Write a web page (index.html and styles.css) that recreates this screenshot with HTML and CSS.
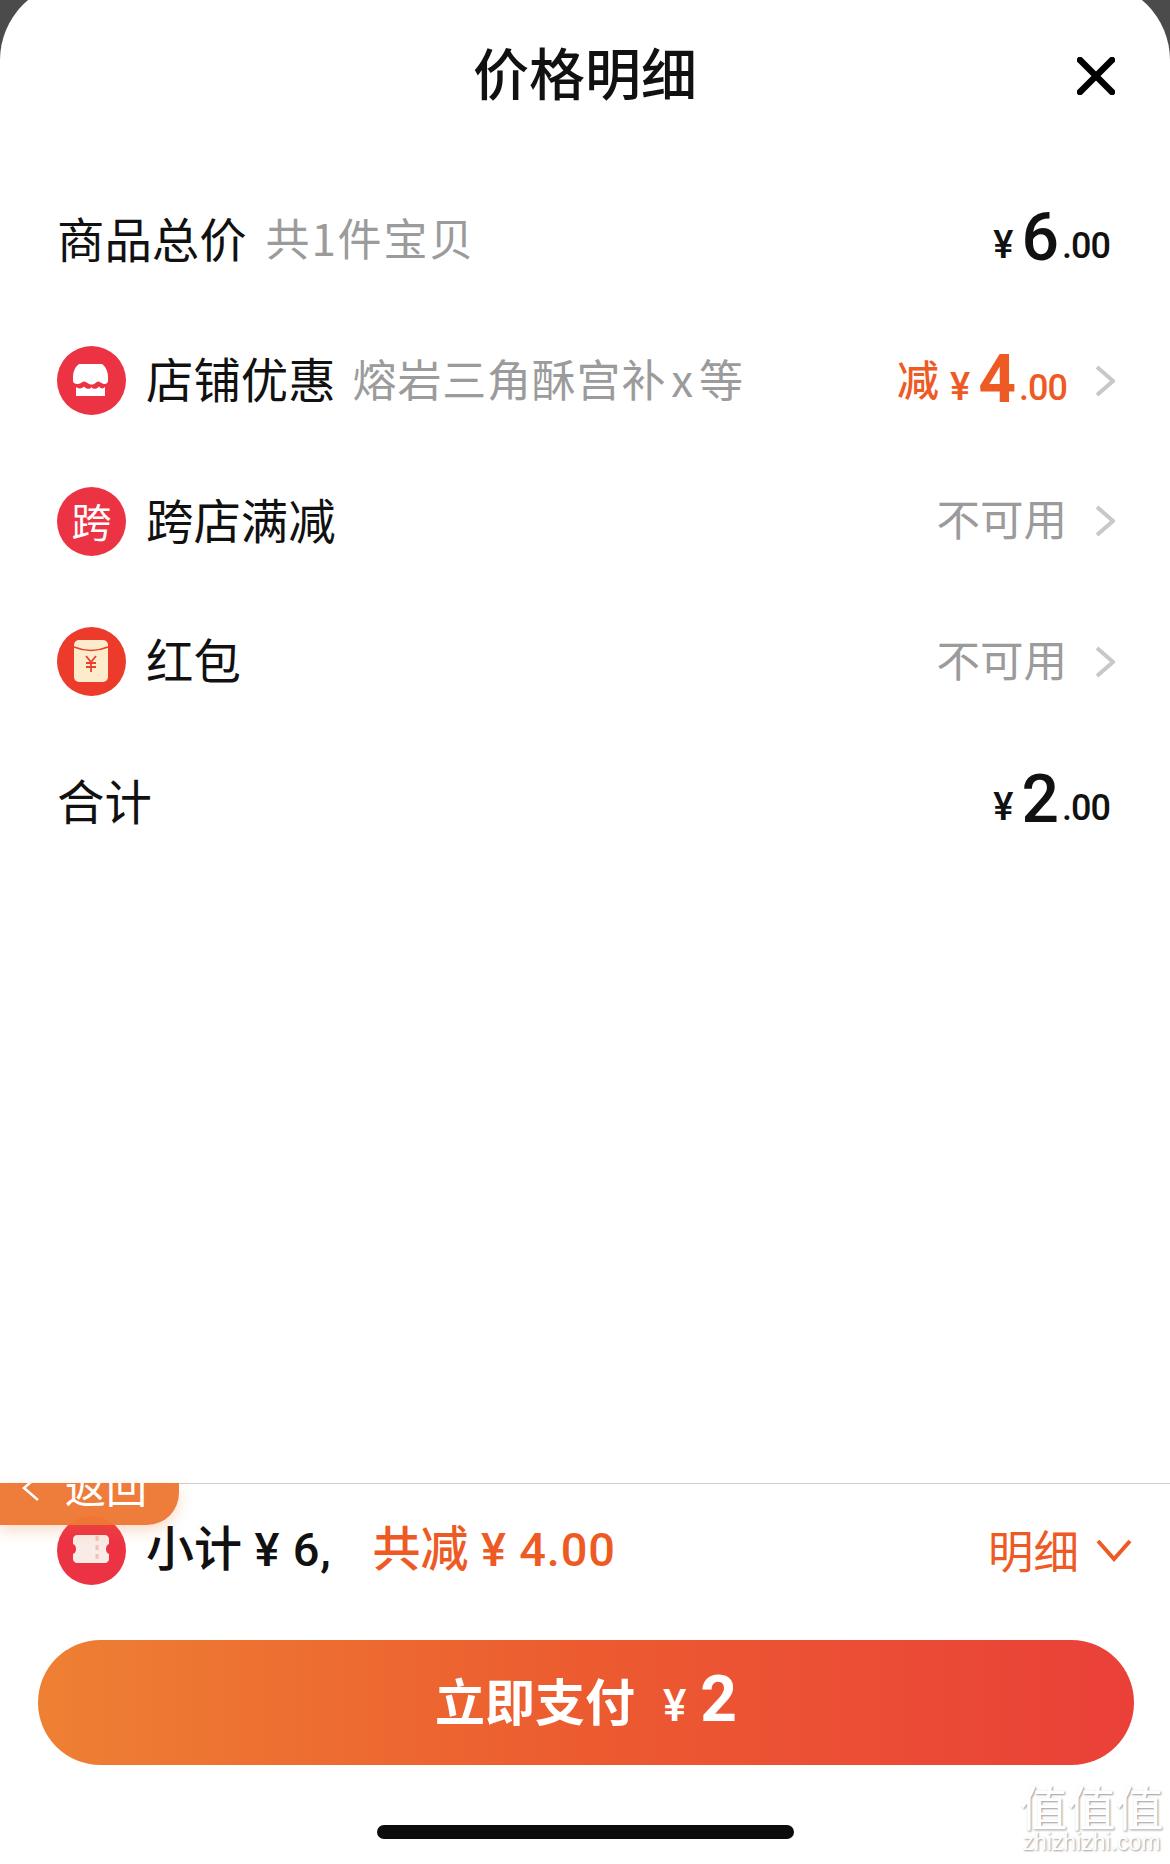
FILE: index.html
```html
<!DOCTYPE html>
<html lang="zh">
<head>
<meta charset="utf-8">
<title>价格明细</title>
<link rel="stylesheet" href="styles.css">
</head>
<body>
<div class="sheet">
  <header class="head">
    <h1 class="title">价格明细</h1>
    <svg class="close" viewBox="0 0 38 38"><path d="M3 3 35 35M35 3 3 35"/></svg>
  </header>
  <main class="list">
    <div class="row">
      <div class="left"><span class="name">商品总价</span><span class="sub sub-a">共1件宝贝</span></div>
      <div class="price price-end"><span class="yen">¥</span><span class="big">6</span><span class="dec">.00</span></div>
    </div>
    <div class="row">
      <div class="left">
        <svg class="ico" viewBox="0 0 69 69"><circle cx="34.5" cy="34.5" r="34.5" fill="#ec3344"/><path fill="#fff" d="M22 18H45C49 21 51 26 51 31V35C51 38 47 39 44.500 37 42 35 40 35 38.500 37 36 39 33 39 30.500 37 28 35 26 35 24 37 21 39 16 38 16 35V31C16 26 18 21 22 18Z"/><path fill="#fff" d="M19 41C21 43 25 43 27 40.500 29 43 33 44 34.500 41 36 44 40 43 42 40.500 44 43 46 43 48 41V50H19Z"/></svg>
        <span class="name">店铺优惠</span><span class="sub sub-b">熔岩三角酥宫补<span class="sub-x">x</span>等</span>
      </div>
      <div class="right">
        <div class="price orange"><span class="cut">减</span><span class="yen">¥</span><span class="big big-strong">4</span><span class="dec">.00</span></div>
        <svg class="chev" viewBox="0 0 20 32"><path d="M2 2 18 16 2 30"/></svg>
      </div>
    </div>
    <div class="row">
      <div class="left">
        <span class="ico ico-text">跨</span>
        <span class="name">跨店满减</span>
      </div>
      <div class="right"><span class="na">不可用</span><svg class="chev" viewBox="0 0 20 32"><path d="M2 2 18 16 2 30"/></svg></div>
    </div>
    <div class="row">
      <div class="left">
        <svg class="ico" viewBox="0 0 69 69"><circle cx="34.500" cy="34.500" r="34.500" fill="#ec3a2b"/><rect x="17" y="13" width="34" height="42" rx="5" fill="#fdeccb"/><path d="M17 20Q34 27 51 20" fill="none" stroke="#e8402f" stroke-width="1.500"/><path d="M29 29 34 35 39 29M34 35V45M29 36H39M29 40H39" fill="none" stroke="#e8402f" stroke-width="1.800"/></svg>
        <span class="name">红包</span>
      </div>
      <div class="right"><span class="na">不可用</span><svg class="chev" viewBox="0 0 20 32"><path d="M2 2 18 16 2 30"/></svg></div>
    </div>
    <div class="row">
      <div class="left"><span class="name">合计</span></div>
      <div class="price price-end"><span class="yen">¥</span><span class="big">2</span><span class="dec">.00</span></div>
    </div>
  </main>
  <footer class="foot">
    <div class="back">
      <svg class="back-arrow" viewBox="0 0 20 24"><path d="M17 2 3 14 17 26"/></svg>
      <span class="back-text">返回</span>
    </div>
    <div class="sum">
      <div class="left">
        <svg class="ico" viewBox="0 0 69 69"><circle cx="34.500" cy="34.500" r="34.500" fill="#ec3344"/><path fill="#f9ebe6" d="M20 19H48C50 19 52 21 52 23V28C48 29 48 37 52 38V43C52 45 50 47 48 47H20C18 47 16 45 16 43V38C20 37 20 29 16 28V23C16 21 18 19 20 19Z"/><path d="M40 20V46" stroke="#f3c0b2" stroke-width="3" stroke-dasharray="5 4"/></svg>
        <span class="name name-strong">小计<span class="num"> ¥ 6,</span></span>
        <span class="name name-strong orange total-cut">共减<span class="num"> ¥ 4.00</span></span>
      </div>
      <div class="detail"><span class="detail-text">明细</span><svg class="chev-down" viewBox="0 0 36 24"><path d="M2 3 18 21 34 3"/></svg></div>
    </div>
    <div class="pay-wrap">
      <button class="pay"><span class="pay-label">立即支付</span><span class="pay-yen">¥</span><span class="pay-num">2</span></button>
    </div>
    <div class="home"></div>
    <div class="mark"><span class="mark-cn">值值值</span><span class="mark-en">zhizhizhi.com</span></div>
  </footer>
</div>
</body>
</html>
```
FILE: styles.css
```css
* { box-sizing: border-box; }
html, body { margin: 0; height: 100%; }
body {
  background: #4b4b4b;
  overflow: hidden;
  font-family: "Noto Sans CJK SC", "Liberation Sans", sans-serif;
  color: #111;
}
.sheet {
  height: 1882px;
  margin-top: -18px;
  background: #fff;
  border-radius: 78px 78px 0 0;
  display: flex;
  flex-direction: column;
  overflow: hidden;
}
.head {
  height: 188px;
  flex: none;
  padding-bottom: 10px;
  display: flex;
  align-items: center;
  justify-content: center;
  position: relative;
}
.title {
  margin: 0;
  font-size: 56px;
  font-weight: 500;
  line-height: 1;
  color: #111;
}
.close {
  position: absolute;
  left: 1077px;
  top: 75px;
  width: 38px;
  height: 38px;
  fill: none;
  stroke: #000;
  stroke-width: 6.500;
  stroke-linecap: round;
}
.list { flex: 1; padding: 0 55px 0 57px; }
.row {
  height: 140.500px;
  display: flex;
  align-items: center;
  justify-content: space-between;
}
.left { display: flex; align-items: center; }
.right { display: flex; align-items: center; }
.ico { width: 69px; height: 69px; flex: none; margin-right: 20px; display: block; }
.ico-text {
  border-radius: 50%;
  background: #ec3344;
  color: #fff;
  font-size: 40px;
  line-height: 66px;
  text-align: center;
}
.name { font-size: 47.400px; line-height: 60px; white-space: pre; padding-bottom: 5px; }
.sub { font-size: 44px; color: #9b9b9b; line-height: 60px; margin-left: 17px; padding-bottom: 6px; }
.sub-a { letter-spacing: 1.800px; margin-left: 19px; }
.sub-b { letter-spacing: 0.800px; }
.sub-x { margin: 0 5px; }
.price {
  display: block;
  padding-top: 13px;
  font-family: Roboto, "Noto Sans CJK SC", sans-serif;
  font-weight: 500;
  line-height: 60px;
  white-space: nowrap;
  color: #111;
}
.price-end { margin-right: 5px; }
.yen { font-size: 38px; margin-right: 8px; vertical-align: 2px; }
.big { font-size: 66px; margin-right: 4px; letter-spacing: -1px; }
.big-strong { font-weight: 700; }
.dec { font-size: 36px; letter-spacing: -1px; vertical-align: 2px; }
.orange { color: #ee5a24; }
.cut { font-size: 42px; font-family: "Noto Sans CJK SC", sans-serif; margin-right: 11px; vertical-align: 6px; }
.chev {
  width: 20px;
  height: 32px;
  margin-left: 28px;
  fill: none;
  stroke: #c8c8c8;
  stroke-width: 4;
}
.na { font-size: 43.500px; color: #9b9b9b; line-height: 60px; padding-bottom: 6px; }
.foot {
  height: 381px;
  flex: none;
  position: relative;
  border-top: 1px solid #d0d0d0;
}
.back {
  position: absolute;
  left: 0;
  top: -1px;
  width: 179px;
  height: 42px;
  background: rgba(237, 120, 52, 0.96);
  border-radius: 0 0 32px 0;
  box-shadow: 0 6px 14px rgba(237, 120, 52, 0.25);
  overflow: hidden;
  z-index: 1;
  color: #fff;
}
.back-arrow {
  position: absolute;
  left: 21px;
  top: -12px;
  width: 20px;
  height: 30px;
  fill: none;
  stroke: #fff;
  stroke-width: 2.500;
}
.back-text {
  position: absolute;
  left: 65px;
  top: -25px;
  font-size: 41px;
  line-height: 54px;
}
.sum {
  height: 130px;
  padding: 2px 38px 0 57px;
  display: flex;
  align-items: center;
  justify-content: space-between;
}
.name-strong { font-weight: 500; font-size: 48px; padding-bottom: 5px; }
.num { font-family: Roboto, "Noto Sans CJK SC", sans-serif; font-weight: 500; font-size: 47px; letter-spacing: 0.800px; }
.total-cut { margin-left: 41px; }
.detail { display: flex; align-items: center; color: #ee5a24; }
.detail-text { font-size: 45.500px; line-height: 60px; padding-bottom: 2px; }
.chev-down {
  width: 36px;
  height: 24px;
  margin-left: 17px;
  fill: none;
  stroke: #ee5a24;
  stroke-width: 4;
}
.pay-wrap { padding: 26px 36px 0 38px; }
.pay {
  display: flex;
  align-items: baseline;
  justify-content: center;
  width: 100%;
  height: 125px;
  border: 0;
  border-radius: 62.500px;
  padding: 24px 0 0;
  background: linear-gradient(90deg, #ee8033 0%, #ec5b30 50%, #ea4039 100%);
  color: #fff;
  font-family: "Noto Sans CJK SC", sans-serif;
  font-weight: 500;
}
.pay-label { font-size: 50px; line-height: 70px; font-weight: 700; }
.pay-yen { font-family: Roboto, sans-serif; font-size: 44px; margin-left: 28px; margin-right: 14px; }
.pay-num { font-family: Roboto, sans-serif; font-size: 64px; line-height: 70px; font-weight: 700; }
.home {
  width: 417px;
  height: 14px;
  margin: 60px auto 0;
  border-radius: 7px;
  background: #0c0c0c;
}
.mark {
  position: absolute;
  right: 7px;
  top: 296px;
  width: 143px;
  display: flex;
  flex-direction: column;
  align-items: center;
  color: #fff;
  text-shadow: 1px 1px 2px #9a9a9a;
}
.mark-cn { font-size: 48px; line-height: 50px; white-space: nowrap; }
.mark-en { font-family: "Liberation Sans", sans-serif; font-size: 23px; line-height: 24px; white-space: nowrap; }
```
